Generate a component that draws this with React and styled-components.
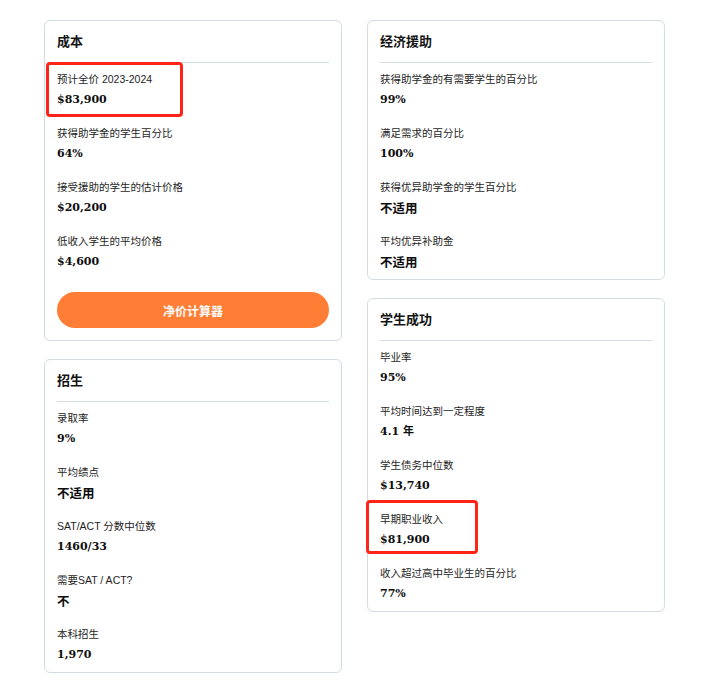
import React from "react";
import styled, { createGlobalStyle } from "styled-components";

const Global = createGlobalStyle`
  html, body { margin: 0; padding: 0; background: #ffffff; }
  body { font-family: "Liberation Sans", "Noto Sans CJK SC", sans-serif; color: #1c1c1c; }
`;

const Page = styled.div`
  display: grid;
  grid-template-columns: 1fr 1fr;
  column-gap: 25px;
  align-items: start;
  padding: 20px 47px 20px 44px;
`;

const Column = styled.div`
  display: flex;
  flex-direction: column;
  gap: 18px;
`;

const Card = styled.section`
  border: 1px solid #d3dbe3;
  border-radius: 6px;
  padding: 11px 12px 8px;
  background: #fff;
`;

const Title = styled.h2`
  margin: 0;
  font-family: "Noto Sans CJK SC", sans-serif;
  font-size: 13px;
  font-weight: 700;
  line-height: 18px;
  color: #141414;
  padding-bottom: 12px;
  border-bottom: 1px solid #d3dbe3;
`;

const List = styled.div`
  display: flex;
  flex-direction: column;
  gap: 16px;
  padding-top: 8px;
`;

const Item = styled.div`
  position: relative;
  display: flex;
  flex-direction: column;
  gap: 4px;
`;

const Label = styled.div`
  font-family: "Liberation Sans", "Noto Sans CJK SC", sans-serif;
  font-size: 10.5px;
  line-height: 16px;
  color: #1e1e1e;
  white-space: nowrap;
`;

const Value = styled.div`
  font-family: ${(p) => (p.$cjk ? `"Noto Sans CJK SC", sans-serif` : `"DejaVu Serif", "Noto Sans CJK SC", serif`)};
  font-size: ${(p) => (p.$cjk ? "12.5px" : "11px")};
  font-weight: 700;
  line-height: 18px;
  color: #0e0e0e;
`;

const Highlight = styled.div`
  position: absolute;
  left: ${(p) => p.$left}px;
  top: ${(p) => p.$top}px;
  width: ${(p) => p.$width}px;
  height: ${(p) => p.$height}px;
  border: 3.5px solid #ff2418;
  border-radius: 4px;
  box-sizing: border-box;
  pointer-events: none;
`;

const CalcButton = styled.button`
  display: flex;
  align-items: center;
  justify-content: center;
  width: 100%;
  height: 36px;
  margin: 21px 0 4px;
  border: none;
  border-radius: 18px;
  background: #ff7d35;
  color: #fff;
  font-family: "Noto Sans CJK SC", sans-serif;
  font-size: 12px;
  font-weight: 700;
  cursor: pointer;
`;

const isCjk = (v) => /^[\u4e00-\u9fff]+$/.test(v);

function Stat({ label, value, mark }) {
  return (
    <Item>
      <Label>{label}</Label>
      <Value $cjk={isCjk(value)}>{value}</Value>
      {mark && <Highlight $left={mark[0]} $top={mark[1]} $width={mark[2]} $height={mark[3]} />}
    </Item>
  );
}

function InfoCard({ title, stats, children }) {
  return (
    <Card>
      <Title>{title}</Title>
      <List>
        {stats.map((s) => (
          <Stat key={s.label} {...s} />
        ))}
      </List>
      {children}
    </Card>
  );
}

const cost = [
  { label: "预计全价 2023-2024", value: "$83,900", mark: [-11, -9, 137, 55] },
  { label: "获得助学金的学生百分比", value: "64%" },
  { label: "接受援助的学生的估计价格", value: "$20,200" },
  { label: "低收入学生的平均价格", value: "$4,600" },
];

const admission = [
  { label: "录取率", value: "9%" },
  { label: "平均绩点", value: "不适用" },
  { label: "SAT/ACT 分数中位数", value: "1460/33" },
  { label: "需要SAT / ACT?", value: "不" },
  { label: "本科招生", value: "1,970" },
];

const aid = [
  { label: "获得助学金的有需要学生的百分比", value: "99%" },
  { label: "满足需求的百分比", value: "100%" },
  { label: "获得优异助学金的学生百分比", value: "不适用" },
  { label: "平均优异补助金", value: "不适用" },
];

const success = [
  { label: "毕业率", value: "95%" },
  { label: "平均时间达到一定程度", value: "4.1 年" },
  { label: "学生债务中位数", value: "$13,740" },
  { label: "早期职业收入", value: "$81,900", mark: [-14, -11, 112, 54] },
  { label: "收入超过高中毕业生的百分比", value: "77%" },
];

export default function App() {
  return (
    <>
      <Global />
      <Page>
        <Column>
          <InfoCard title="成本" stats={cost}>
            <CalcButton>净价计算器</CalcButton>
          </InfoCard>
          <InfoCard title="招生" stats={admission} />
        </Column>
        <Column>
          <InfoCard title="经济援助" stats={aid} />
          <InfoCard title="学生成功" stats={success} />
        </Column>
      </Page>
    </>
  );
}
